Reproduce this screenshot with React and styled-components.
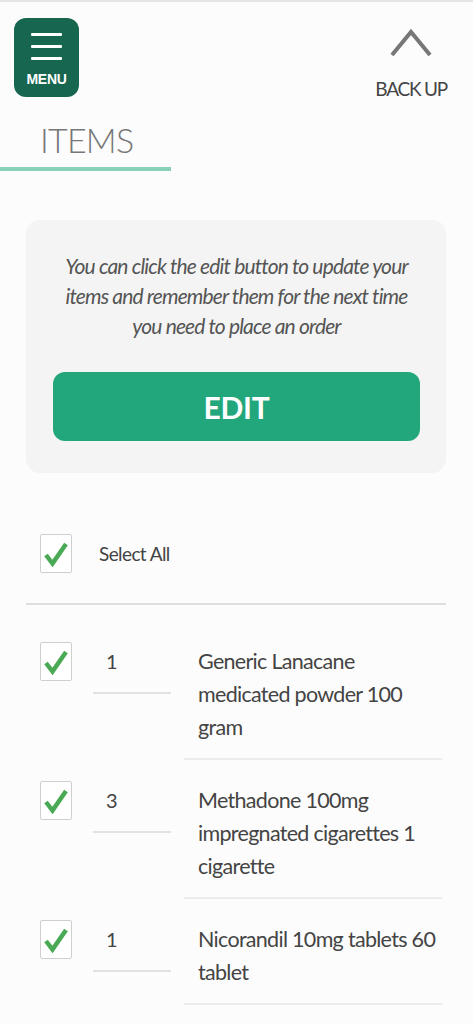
import React from "react";
import styled, { createGlobalStyle } from "styled-components";

const Global = createGlobalStyle`
  html, body { margin: 0; padding: 0; background: #fcfcfc; }
  body { font-family: Lato, "Noto Sans", sans-serif; }
  * { box-sizing: border-box; }
`;

const Page = styled.div`
  width: 473px;
  min-height: 1024px;
  border-top: 2px solid #e4e4e4;
  background: #fcfcfc;
  overflow: hidden;
`;

const Header = styled.header`
  display: flex;
  justify-content: space-between;
  align-items: flex-start;
  padding: 16px 26px 0 14px;
`;

const MenuButton = styled.button`
  width: 65px;
  height: 79px;
  border: none;
  border-radius: 12px;
  background: #176650;
  display: flex;
  flex-direction: column;
  align-items: center;
  padding: 15px 0 0;
  cursor: pointer;
`;

const Bar = styled.span`
  display: block;
  width: 31px;
  height: 3px;
  background: #fff;
  border-radius: 1px;
  margin-bottom: 9px;
`;

const MenuLabel = styled.span`
  font-family: "Liberation Sans", Arial, sans-serif;
  font-weight: 700;
  font-size: 14px;
  color: #fff;
  letter-spacing: -0.3px;
  margin-top: 2px;
`;

const BackUp = styled.button`
  border: none;
  background: none;
  padding: 0;
  margin-top: 10px;
  display: flex;
  flex-direction: column;
  align-items: center;
  gap: 20px;
  cursor: pointer;
`;

const BackLabel = styled.span`
  font-family: Lato, sans-serif;
  font-weight: 400;
  font-size: 19px;
  color: #444;
  letter-spacing: -1.2px;
  line-height: 22px;
`;

const TitleTab = styled.div`
  width: 171px;
  margin-top: 20px;
  padding: 0 0 7px 40px;
  border-bottom: 4px solid #88d1b6;
`;

const Title = styled.h1`
  margin: 0;
  font-family: Lato, sans-serif;
  font-weight: 300;
  font-size: 34px;
  line-height: 40px;
  color: #777;
  letter-spacing: -0.8px;
`;

const Card = styled.section`
  margin: 49px 27px 0 26px;
  background: #f4f4f4;
  border-radius: 14px;
  padding: 31px 26px 32px 27px;
  display: flex;
  flex-direction: column;
  align-items: stretch;
`;

const Info = styled.p`
  margin: 0 0 31px;
  text-align: center;
  font-family: Lato, sans-serif;
  font-style: italic;
  font-size: 21px;
  line-height: 30px;
  color: #555;
  letter-spacing: -0.85px;
  padding: 0;
`;

const EditButton = styled.button`
  height: 69px;
  border: none;
  border-radius: 12px;
  background: #22a67c;
  color: #fff;
  font-family: Lato, sans-serif;
  font-weight: 700;
  font-size: 30px;
  letter-spacing: -0.3px;
  cursor: pointer;
`;

const SelectRow = styled.label`
  display: flex;
  align-items: center;
  gap: 27px;
  padding: 0 0 0 40px;
  margin-top: 61px;
  height: 39px;
`;

const SelectLabel = styled.span`
  font-family: Lato, sans-serif;
  font-size: 19px;
  color: #444;
  letter-spacing: -0.6px;
`;

const Divider = styled.hr`
  margin: 30px 27px 0 26px;
  border: none;
  border-top: 2px solid #dedede;
`;

const List = styled.ul`
  list-style: none;
  margin: 0;
  padding: 0 31px 0 40px;
`;

const Row = styled.li`
  display: flex;
  align-items: flex-start;
  margin-top: ${(p) => (p.$first ? 37 : 21)}px;
`;

const Box = styled.span`
  flex: none;
  width: 32px;
  height: 39px;
  border: 1px solid #cfcfcf;
  border-radius: 2px;
  background: #fff;
  display: flex;
  align-items: center;
  justify-content: center;
`;

const Qty = styled.div`
  flex: none;
  width: 78px;
  height: 52px;
  margin-left: 21px;
  padding: 7px 0 0 13px;
  border-bottom: 2px solid #e2e2e2;
  font-family: Lato, sans-serif;
  font-size: 20px;
  line-height: 24px;
  color: #444;
`;

const Desc = styled.div`
  flex: 1;
  margin-left: 13px;
  padding: 3px 0 14px 14px;
  border-bottom: 2px solid #ececec;
  font-family: Lato, sans-serif;
  font-size: 21.5px;
  line-height: 33px;
  color: #444;
  letter-spacing: -0.7px;
`;

const Check = () => (
  <svg width="24" height="26" viewBox="0 0 24 26" aria-hidden="true">
    <path
      d="M2 14 L8.5 22.5 L22 3"
      fill="none"
      stroke="#4aa954"
      strokeWidth="4.5"
      strokeLinecap="butt"
      strokeLinejoin="miter"
    />
  </svg>
);

const Checkbox = () => (
  <Box>
    <Check />
  </Box>
);

const Chevron = () => (
  <svg width="44" height="30" viewBox="0 0 44 30" aria-hidden="true">
    <path d="M3 27 L22 4 L41 27" fill="none" stroke="#777" strokeWidth="4" />
  </svg>
);

const items = [
  { qty: 1, name: "Generic Lanacane medicated powder 100 gram" },
  { qty: 3, name: "Methadone 100mg impregnated cigarettes 1 cigarette" },
  { qty: 1, name: "Nicorandil 10mg tablets 60 tablet" },
];

export default function App() {
  return (
    <Page>
      <Global />
      <Header>
        <MenuButton aria-label="Menu">
          <Bar />
          <Bar />
          <Bar />
          <MenuLabel>MENU</MenuLabel>
        </MenuButton>
        <BackUp>
          <Chevron />
          <BackLabel>BACK UP</BackLabel>
        </BackUp>
      </Header>
      <TitleTab>
        <Title>ITEMS</Title>
      </TitleTab>
      <Card>
        <Info>
          You can click the edit button to update your items and remember them
          for the next time you need to place an order
        </Info>
        <EditButton>EDIT</EditButton>
      </Card>
      <SelectRow>
        <Checkbox />
        <SelectLabel>Select All</SelectLabel>
      </SelectRow>
      <Divider />
      <List>
        {items.map((it, i) => (
          <Row key={i} $first={i === 0}>
            <Checkbox />
            <Qty>{it.qty}</Qty>
            <Desc>{it.name}</Desc>
          </Row>
        ))}
      </List>
    </Page>
  );
}
